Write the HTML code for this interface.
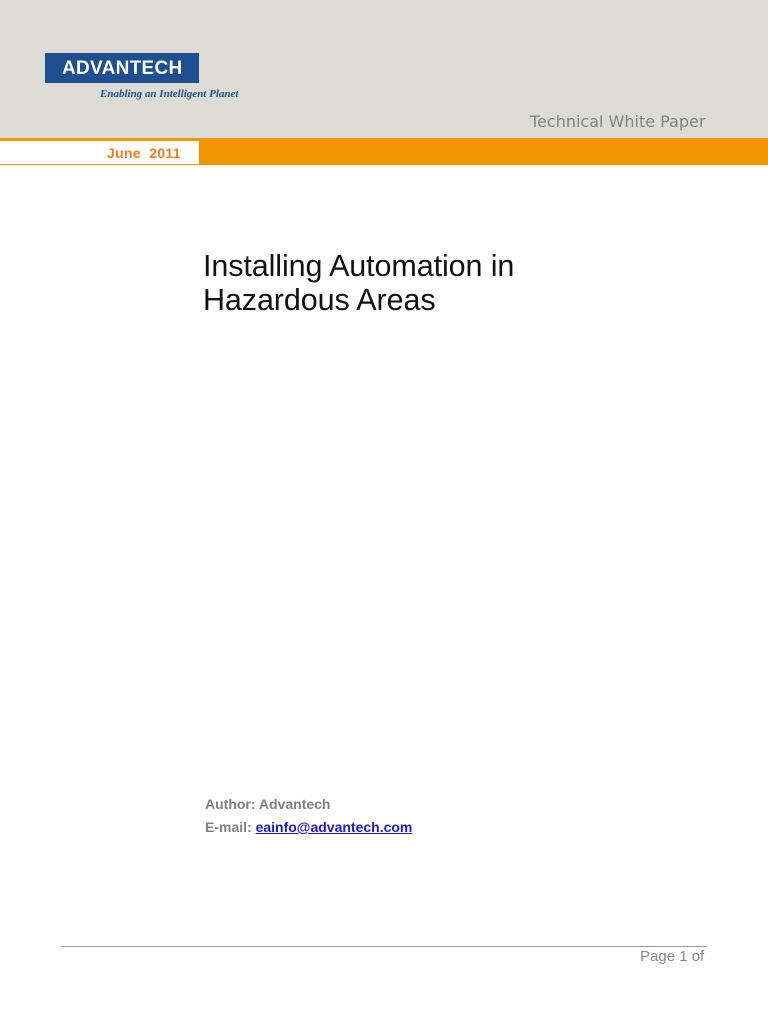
<!DOCTYPE html>
<html><head><style>
body{margin:0;width:768px;height:1024px;background:#fff;position:relative;font-family:"Liberation Sans",sans-serif;overflow:hidden}
.a{position:absolute}
</style></head><body>
<div class="a" style="left:0;top:0;width:768px;height:138px;background:#dcdcd5"></div>
<div class="a" style="left:0;top:138px;width:768px;height:27px;background:#f29400"></div>
<div class="a" style="left:0;top:141px;width:199px;height:23px;background:#fff"></div>
<div class="a" style="left:107px;top:145px;font-size:14px;font-weight:bold;color:#ee7d1f;letter-spacing:0.3px">June&nbsp; 2011</div>
<div class="a" style="left:45px;top:53px;width:154px;height:30px;background:#1d4f91"></div>
<div class="a" style="left:62px;top:58px;font-size:19px;font-weight:bold;color:#fff;letter-spacing:0.3px">ADVANTECH</div>
<div class="a" style="left:100px;top:88px;font-family:'Liberation Serif',serif;font-style:italic;font-weight:bold;font-size:11px;color:#1d4f91">Enabling an Intelligent Planet</div>
<div class="a" style="left:530px;top:112px;font-family:'DejaVu Sans',sans-serif;font-size:16px;color:#7f847c">Technical White Paper</div>
<div class="a" style="left:203px;top:249px;font-size:30.5px;line-height:34px;color:#111;letter-spacing:-0.1px">Installing Automation in<br>Hazardous Areas</div>
<div class="a" style="left:205px;top:793px;font-size:14px;font-weight:bold;color:#808080;line-height:23px">Author: Advantech<br>E-mail: <span style="color:#1a1adb;text-decoration:underline">eainfo@advantech.com</span></div>
<div class="a" style="left:61px;top:946px;width:646px;height:1px;background:#999"></div>
<div class="a" style="left:640px;top:948px;font-size:15px;color:#888">Page 1 of</div>
</body></html>
